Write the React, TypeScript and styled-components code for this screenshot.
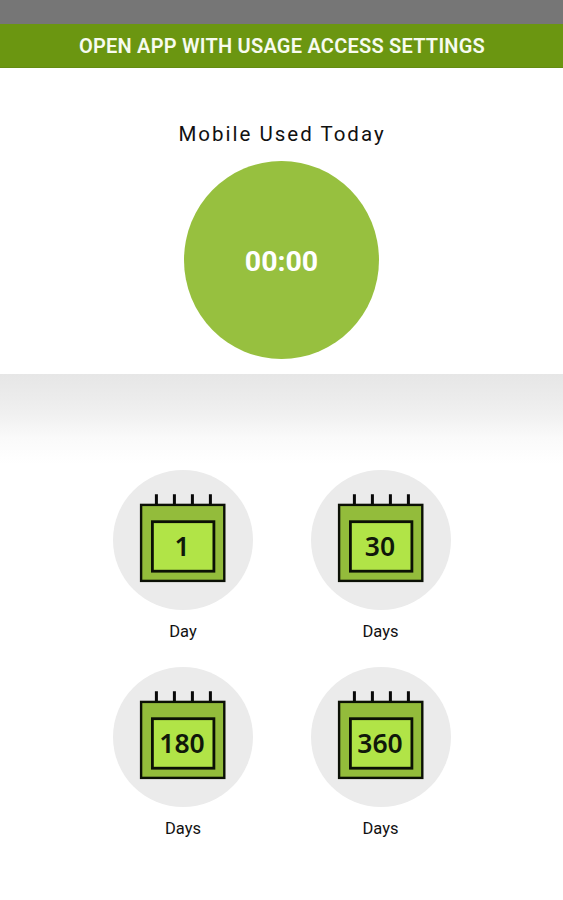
import React from "react";
import styled, { createGlobalStyle } from "styled-components";

const GlobalStyle = createGlobalStyle`
  * { box-sizing: border-box; }
  body { margin: 0; background: #fff; }
`;

const Screen = styled.main`
  display: flex;
  flex-direction: column;
  width: 563px;
  height: 900px;
  overflow: hidden;
  background: #fff;
  font-family: Roboto, sans-serif;
  color: #111;
`;

const StatusBar = styled.div`
  flex: none;
  height: 24px;
  background: #767676;
`;

const SettingsButton = styled.button`
  flex: none;
  height: 43.5px;
  padding: 1px 0 0 1px;
  border: 0;
  border-bottom: 1px solid #648c12;
  background: #6b9611;
  color: #f7fbef;
  font: 600 20px/42px Roboto, sans-serif;
  letter-spacing: 0.23px;
  text-align: center;
`;

const Summary = styled.section`
  flex: none;
  height: 306.5px;
  display: flex;
  flex-direction: column;
  align-items: center;
  padding-top: 54px;
`;

const Title = styled.h1`
  margin: 0;
  font-size: 20.5px;
  line-height: 25px;
  font-weight: 400;
  letter-spacing: 2px;
  padding-left: 1px;
`;

const Timer = styled.div`
  display: flex;
  align-items: center;
  justify-content: center;
  width: 195px;
  height: 198.5px;
  margin-top: 14px;
  padding-top: 3px;
  border-radius: 50%;
  background: #97c03f;
  color: #fff;
  font-size: 28.5px;
  font-weight: 700;
`;

const History = styled.section`
  flex: 1;
  padding: 95.7px 0 0 113px;
  background: linear-gradient(#e6e6e6 0, #ececec 25px, #f1f1f1 42px, #fafafa 64px, #fff 90px);
`;

const PeriodGrid = styled.div`
  display: grid;
  grid-template-columns: 140px 140px;
  column-gap: 57.5px;
  grid-auto-rows: 197.4px;
`;

const Period = styled.div`
  display: flex;
  flex-direction: column;
  align-items: center;
`;

const Disc = styled.div`
  width: 140px;
  height: 140px;
  border-radius: 50%;
  background: #ebebeb;
`;

const PeriodLabel = styled.span`
  margin-top: 12px;
  font-size: 16.5px;
  line-height: 20px;
`;

const DayCount = styled.text`
  font-family: "Noto Sans", sans-serif;
  font-weight: 600;
  font-size: 26.5px;
  text-anchor: middle;
  fill: #10180a;
`;

const Calendar = ({ count }: { count: number }) => (
  <svg width="140" height="140" viewBox="0 0 140 140" aria-hidden="true">
    <path d="M43.4 24.2v11M61.4 24.2v11M79.4 24.2v11M97.4 24.2v11" stroke="#080808" strokeWidth="3" />
    <rect x="28.1" y="34.9" width="83.2" height="76" fill="#93bc3b" stroke="#0b1005" strokeWidth="2.4" />
    <rect x="39.4" y="51.7" width="61.5" height="49.5" fill="#b1e447" stroke="#0b1005" strokeWidth="2.8" />
    <DayCount x="69" y="85.5">{count}</DayCount>
  </svg>
);

const periods = [
  { count: 1, label: "Day" },
  { count: 30, label: "Days" },
  { count: 180, label: "Days" },
  { count: 360, label: "Days" },
];

export default function App() {
  return (
    <>
      <GlobalStyle />
      <Screen>
        <StatusBar />
        <SettingsButton>OPEN APP WITH USAGE ACCESS SETTINGS</SettingsButton>
        <Summary>
          <Title>Mobile Used Today</Title>
          <Timer>00:00</Timer>
        </Summary>
        <History>
          <PeriodGrid>
            {periods.map(({ count, label }) => (
              <Period key={count}>
                <Disc>
                  <Calendar count={count} />
                </Disc>
                <PeriodLabel>{label}</PeriodLabel>
              </Period>
            ))}
          </PeriodGrid>
        </History>
      </Screen>
    </>
  );
}
